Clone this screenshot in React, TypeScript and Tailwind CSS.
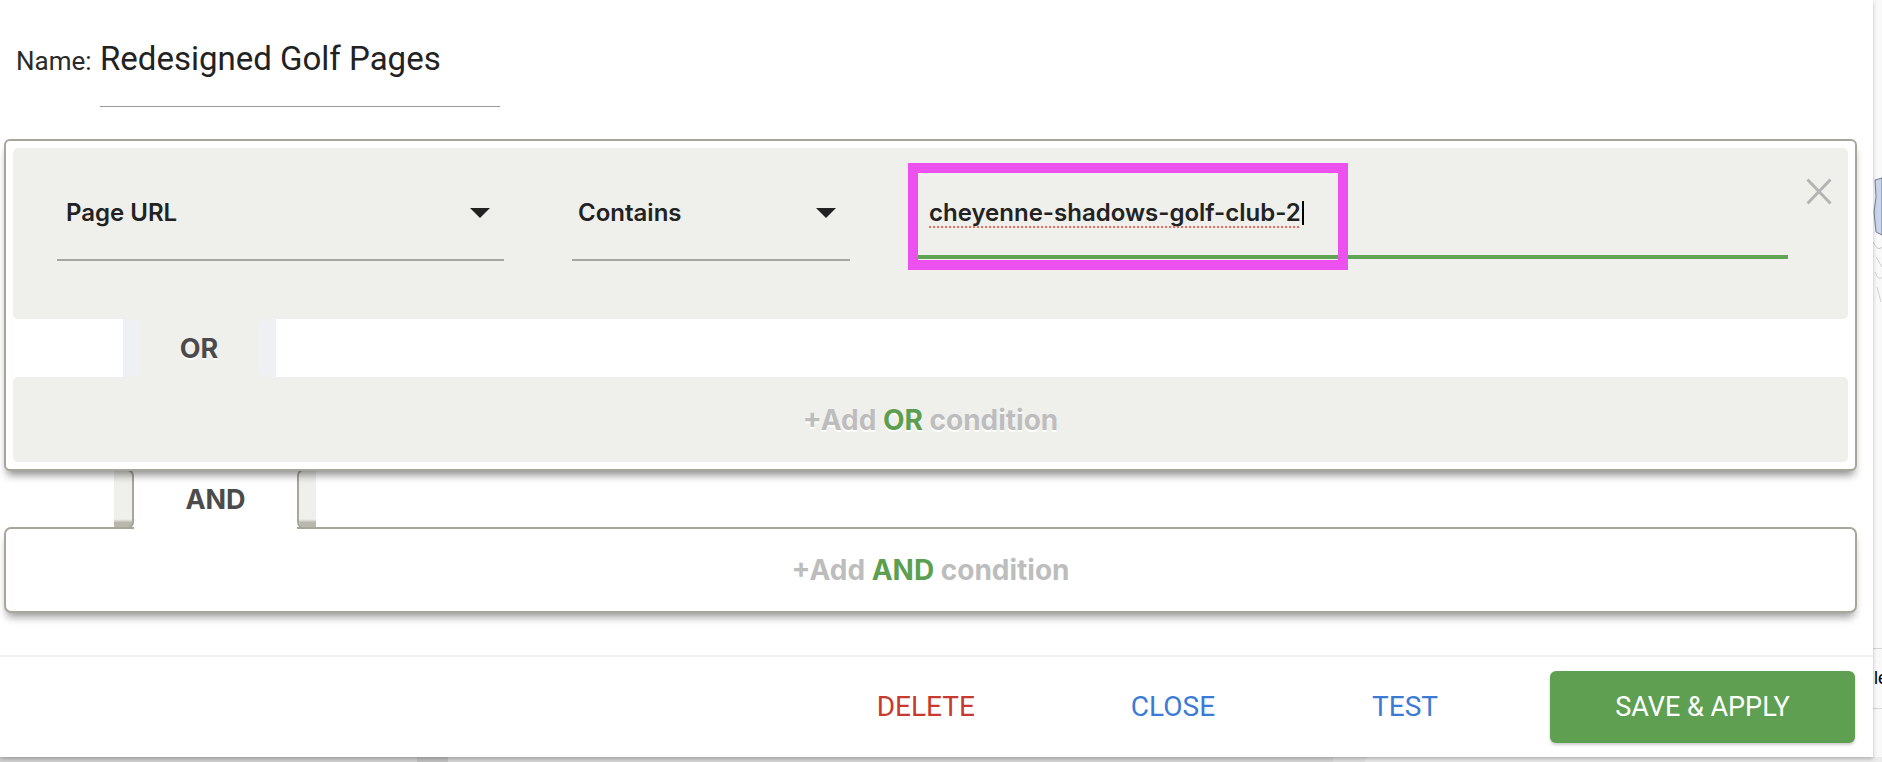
import React from "react";

function Triangle() {
  return (
    <svg width="20" height="10" viewBox="0 0 20 10" className="shrink-0">
      <polygon points="0,0 20,0 10,10" fill="#222222" />
    </svg>
  );
}

function SelectField({ label, width, padLeft }: { label: string; width: string; padLeft: string }) {
  return (
    <div
      className={`${width} ${padLeft} mt-[35px] h-[78px] pb-[16px] pr-[14px] border-b-2 border-[#a6a6a6] flex items-center justify-between`}
    >
      <span className="text-[24px] leading-none font-semibold text-[#222222]">{label}</span>
      <Triangle />
    </div>
  );
}

export default function App() {
  return (
    <div className="w-[1882px] h-[762px] overflow-hidden bg-[#d6d6d6] flex flex-col font-['Roboto',sans-serif]">
      <div className="flex h-[757px]">
        {/* dialog */}
        <div className="w-[1873px] h-full bg-white flex flex-col relative z-10 shadow-[0_2px_4px_rgba(0,0,0,0.25)]">
          {/* name row */}
          <div className="flex items-baseline pl-[16px] pt-[39px]">
            <span className="w-[84px] text-[26px] leading-[40px] text-[#2a2a2a]">Name:</span>
            <div className="w-[400px] text-[33px] leading-[40px] text-[#222222] pb-[27px] border-b border-[#9b9b9b]">
              Redesigned Golf Pages
            </div>
          </div>

          {/* OR group box */}
          <div className="ml-[4px] mr-[16px] mt-[32px] relative z-20 border-2 border-[#a8a59a] rounded-[6px] bg-white p-[7px] shadow-[0_7px_8px_-3px_rgba(0,0,0,0.45)] font-['Inter',sans-serif]">
            {/* condition row */}
            <div className="bg-[#efefeb] rounded-[5px] h-[171px] flex items-start pl-[44px] pr-[16px]">
              <SelectField label="Page URL" width="w-[447px]" padLeft="pl-[9px]" />
              <div className="ml-[68px]">
                <SelectField label="Contains" width="w-[278px]" padLeft="pl-[6px]" />
              </div>
              <div className="ml-[68px] flex-1 mt-[35px] h-[76px] pb-[12px] pl-[11px] border-b-4 border-[#62a456] relative flex items-center">
                <span className="text-[24px] leading-none font-semibold text-[#222222] underline decoration-dotted decoration-[#ee6b5e] decoration-2 underline-offset-[5px]">
                  cheyenne-shadows-golf-club-2
                </span>
                <span className="w-[2px] h-[24px] bg-black ml-[1px]" />
                <div className="absolute left-[-10px] top-[-20px] w-[440px] h-[107px] border-[10px] border-[#ec50ef]" />
              </div>
              <div className="ml-[18px] mt-[30px] w-[26px] h-[27px]">
                <svg width="26" height="27" viewBox="0 0 26 27">
                  <line x1="1.5" y1="1.5" x2="24.5" y2="25.5" stroke="#b4b4b4" strokeWidth="3" />
                  <line x1="24.5" y1="1.5" x2="1.5" y2="25.5" stroke="#b4b4b4" strokeWidth="3" />
                </svg>
              </div>
            </div>

            {/* OR tab */}
            <div className="h-[58px] flex">
              <div className="ml-[110px] w-[153px] flex bg-[#efefeb]">
                <div className="w-[17px] bg-[#eff0f3] rounded-r-[8px]" />
                <div className="flex-1 flex items-center justify-center text-[27px] leading-none font-bold text-[#4b4b4b] [text-shadow:0_2px_1px_#ffffff]">
                  OR
                </div>
                <div className="w-[18px] bg-[#eff0f3] rounded-l-[8px]" />
              </div>
            </div>

            {/* add OR */}
            <div className="bg-[#efefeb] rounded-[5px] h-[85px] flex items-center justify-center text-[28px] leading-none font-bold text-[#bdbdbd] [text-shadow:0_2px_1px_#ffffff]">
              <span>+Add&nbsp;</span>
              <span className="text-[#5c9f50]">OR</span>
              <span>&nbsp;condition</span>
            </div>
          </div>

          {/* AND connector */}
          <div className="-mt-[2px] -mb-[2px] h-[60px] relative z-10 flex font-['Inter',sans-serif]">
            <div className="ml-[114px] w-[20px] border-y-2 border-r-2 border-[#a8a59a] rounded-r-[7px] bg-[linear-gradient(to_bottom,#efefeb_0%,#efefeb_86%,#b9b6ad_92%,#b9b6ad_100%)]" />
            <div className="w-[163px] bg-white flex items-center justify-center text-[27px] leading-none font-bold text-[#4b4b4b]">
              AND
            </div>
            <div className="flex-1 mr-[24px] border-y-2 border-l-2 border-[#a8a59a] rounded-l-[7px] bg-white flex">
              <div className="w-[17px] rounded-l-[5px] bg-[linear-gradient(to_bottom,#efefeb_0%,#efefeb_86%,#b9b6ad_92%,#b9b6ad_100%)]" />
            </div>
          </div>

          {/* AND box */}
          <div className="ml-[4px] mr-[16px] h-[86px] border-2 border-[#a8a59a] rounded-[7px] bg-white shadow-[0_7px_8px_-3px_rgba(0,0,0,0.4)] flex items-center justify-center font-['Inter',sans-serif] text-[28px] leading-none font-bold text-[#bdbdbd]">
            <span>+Add&nbsp;</span>
            <span className="text-[#5c9f50]">AND</span>
            <span>&nbsp;condition</span>
          </div>

          {/* divider */}
          <div className="mt-[42px] h-[2px] bg-[#f0f0f0]" />

          {/* footer */}
          <div className="flex-1 flex items-center justify-end pr-[18px] text-[28px] leading-none uppercase">
            <span className="text-[#c8392f]">DELETE</span>
            <span className="ml-[156px] text-[#3b7bd6]">CLOSE</span>
            <span className="ml-[157px] text-[#3b7bd6]">TEST</span>
            <div className="ml-[112px] w-[305px] h-[72px] rounded-[6px] bg-[#5e9f52] text-white text-[27px] flex items-center justify-center shadow-[0_2px_3px_rgba(0,0,0,0.2)]">
              SAVE &amp; APPLY
            </div>
          </div>
        </div>

        {/* page peeking at right */}
        <div className="flex-1 bg-[#f9f9f9] flex flex-col overflow-hidden">
          <div className="h-[172px]" />
          <svg width="9" height="135" viewBox="0 0 9 135" className="shrink-0">
            <path d="M2 8 L9 6 L9 63 L3 60 L1 40 L3 25 Z" fill="#c9d5ea" stroke="#5a6478" strokeWidth="0.8" />
            <path d="M0 70 Q5 80 9 75" fill="none" stroke="#bdbdbd" strokeWidth="0.8" />
            <path d="M3 85 L9 95 M2 100 Q6 110 9 105 M4 115 L8 130" fill="none" stroke="#c4c4c4" strokeWidth="0.8" />
          </svg>
          <div className="h-[341px]" />
          <div className="h-[61px] border-y border-[#d6d6d6] flex items-center text-[18px] text-black font-['Liberation_Sans',sans-serif] pl-[1px]">
            le
          </div>
          <div className="flex-1" />
        </div>
      </div>

      {/* page peeking below */}
      <div className="h-[5px] flex">
        <div className="w-[417px] bg-[#d3d3d3]" />
        <div className="w-[31px] bg-[#c3c3c3]" />
        <div className="w-[885px] bg-[#d8d8d8]" />
        <div className="w-[32px] bg-[#e2e2e2]" />
        <div className="flex-1 bg-[#ececec] rounded-tl-[4px]" />
      </div>
    </div>
  );
}
